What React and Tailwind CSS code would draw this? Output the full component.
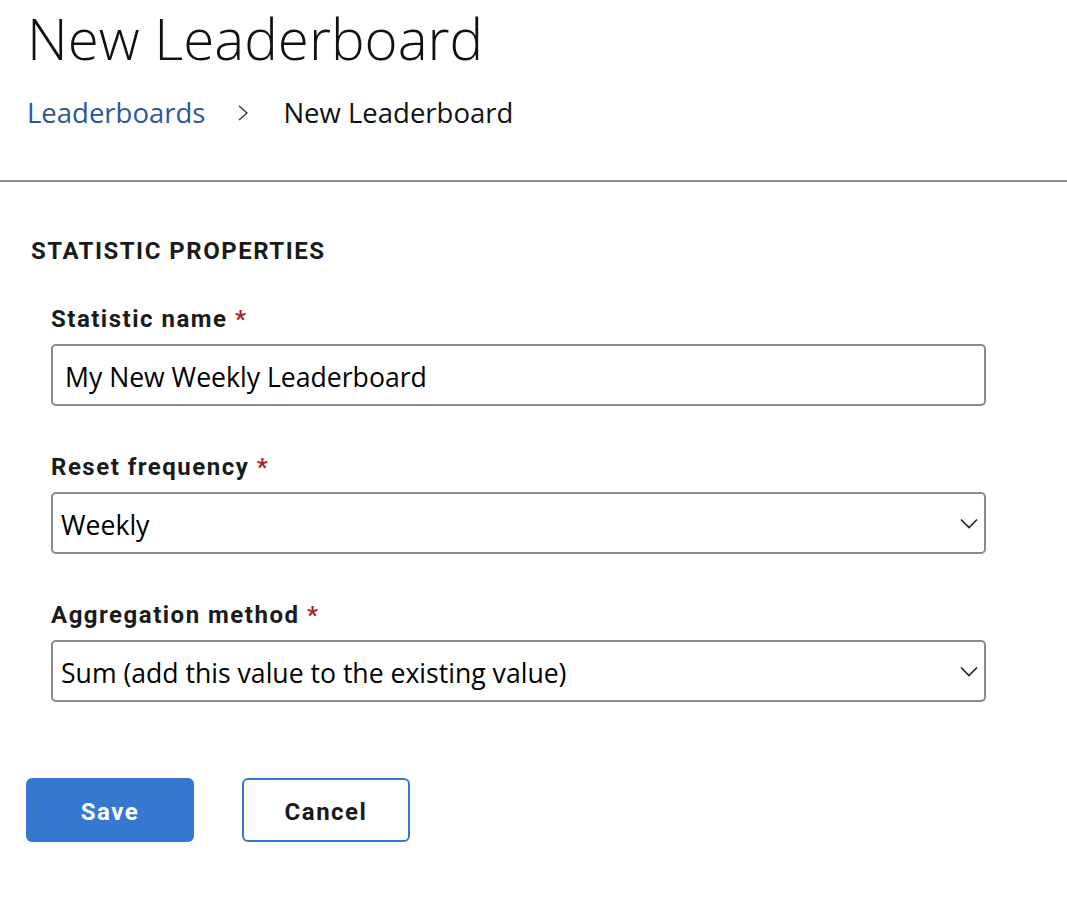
import React from 'react'

const Chevron = () => (
  <svg className="w-[18px] h-[11px] text-[#222]" viewBox="0 0 18 11" fill="none" stroke="currentColor" strokeWidth="1.6">
    <path d="M1 1.5l8 8 8-8" />
  </svg>
)

const Label = ({ children }) => (
  <div className="mb-[10px] text-[24px] font-bold leading-[30px] tracking-[1.5px] text-[#1b1b1b]" style={{ fontFamily: 'Roboto, sans-serif' }}>
    {children} <span className="text-[#a4262c]">*</span>
  </div>
)

const SelectBox = ({ value }) => (
  <div className="flex h-[62px] items-center justify-between rounded-[5px] border-2 border-[#8a8a8a] pl-[8px] pr-[6px] pt-[6px]">
    <span className="text-[26.6px] text-black">{value}</span>
    <span className="-mt-[6px]"><Chevron /></span>
  </div>
)

export default function App() {
  return (
    <div className="min-h-screen bg-white" style={{ fontFamily: '"Open Sans", sans-serif' }}>
      <div className="px-[27px]">
        <h1 className="text-[56.5px] font-light leading-[77px] text-[#111]">New Leaderboard</h1>
        <div className="mt-[14px] flex items-center text-[27.5px] leading-[44px]">
          <span className="text-[#2b579a]">Leaderboards</span>
          <span className="ml-[32px] mr-[34px] text-[#333]">
            <svg className="w-[12px] h-[18px]" viewBox="0 0 12 18" fill="none" stroke="currentColor" strokeWidth="1.3">
              <path d="M2 2l8 7-8 7" />
            </svg>
          </span>
          <span className="text-[#111]">New Leaderboard</span>
        </div>
      </div>
      <div className="mt-[45px] h-[2px] bg-[#8a8a8a]" />

      <div className="pl-[31px] pt-[53px]">
        <div className="text-[24px] font-bold leading-[32px] tracking-[1.5px] text-[#1b1b1b]" style={{ fontFamily: 'Roboto, sans-serif' }}>
          STATISTIC PROPERTIES
        </div>
        <div className="mt-[37px] w-[955px] pl-[20px]">
          <Label>Statistic name</Label>
          <div className="flex h-[62px] items-center rounded-[5px] border-2 border-[#8a8a8a] px-[12px] pt-[6px]">
            <span className="text-[26.6px] text-black">My New Weekly Leaderboard</span>
          </div>

          <div className="mt-[46px]">
            <Label>Reset frequency</Label>
            <SelectBox value="Weekly" />
          </div>

          <div className="mt-[46px]">
            <Label>Aggregation method</Label>
            <SelectBox value="Sum (add this value to the existing value)" />
          </div>
        </div>
      </div>

      <div className="mt-[76px] flex gap-[48px] pl-[26px]" style={{ fontFamily: 'Roboto, sans-serif' }}>
        <button className="h-[64px] w-[168px] rounded-[6px] bg-[#3478d0] pt-[3px] text-[24px] font-bold tracking-[1.5px] text-white">Save</button>
        <button className="h-[64px] w-[168px] rounded-[6px] border-2 border-[#3478d0] bg-white pt-[3px] text-[24px] font-bold tracking-[1.5px] text-[#1b1b1b]">Cancel</button>
      </div>
    </div>
  )
}
